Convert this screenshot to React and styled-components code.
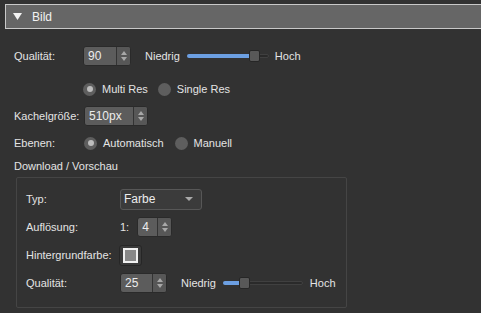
import React from "react";
import styled, { createGlobalStyle } from "styled-components";

const Global = createGlobalStyle`
  html, body { margin: 0; padding: 0; background: #323232; overflow: hidden; }
  body { font-family: "Liberation Sans", Arial, sans-serif; font-size: 11px; color: #e4e4e4; }
`;

const Page = styled.div`
  width: 481px;
  height: 313px;
  padding-top: 4px;
  box-sizing: border-box;
`;

const Header = styled.div`
  margin-left: 5px;
  margin-right: -4px;
  height: 23px;
  background: #666666;
  border: 1px solid #c9c9c9;
  display: flex;
  align-items: center;
  padding-left: 7px;
  gap: 10px;
  font-size: 12px;
  color: #f2f2f2;
`;

const Content = styled.div`
  padding: 16px 0 0 14px;
  display: flex;
  flex-direction: column;
`;

const Row = styled.div`
  display: flex;
  align-items: center;
  height: 22px;
  margin-top: ${(p) => p.$mt || 0}px;
`;

const Label = styled.div`
  width: ${(p) => p.$w}px;
  flex: none;
  white-space: nowrap;
`;

const Spin = styled.div`
  width: ${(p) => p.$w}px;
  height: 20px;
  box-sizing: border-box;
  display: flex;
  background: #5c5c5c;
  border: 1px solid #2a2a2a;
  border-radius: 3px;
  overflow: hidden;
  flex: none;
  margin-left: ${(p) => p.$ml || 0}px;
`;

const SpinValue = styled.div`
  flex: 1;
  display: flex;
  align-items: center;
  padding-left: 4px;
  font-size: 12px;
  color: #ececec;
`;

const SpinButtons = styled.div`
  width: 13px;
  border-left: 1px solid #333;
  background: #575757;
  display: flex;
  flex-direction: column;
  align-items: center;
  justify-content: center;
  gap: 2px;
`;

const Arrow = styled.div`
  width: 0;
  height: 0;
  border-left: 3.5px solid transparent;
  border-right: 3.5px solid transparent;
  ${(p) => (p.$up ? "border-bottom: 4px solid #a8a8a8;" : "border-top: 4px solid #a8a8a8;")}
`;

const Text = styled.span`
  margin-left: ${(p) => p.$ml || 0}px;
  white-space: nowrap;
`;

const Track = styled.div`
  position: relative;
  width: ${(p) => p.$w}px;
  height: 4px;
  background: #2a2a2a;
  border: 1px solid #404040;
  border-radius: 2px;
  margin-left: ${(p) => p.$ml}px;
  margin-right: ${(p) => p.$mr}px;
  box-sizing: border-box;
  flex: none;
`;

const Fill = styled.div`
  position: absolute;
  left: -1px;
  top: -1px;
  height: 4px;
  background: #6c9fe2;
  border-radius: 2px;
`;

const Handle = styled.div`
  position: absolute;
  top: -5px;
  width: 11px;
  height: 12px;
  box-sizing: border-box;
  background: #585858;
  border: 1px solid #262626;
  border-radius: 2px;
`;

const RadioWrap = styled.div`
  display: flex;
  align-items: center;
  margin-right: ${(p) => p.$mr || 0}px;
`;

const RadioCircle = styled.div`
  width: 13px;
  height: 13px;
  border-radius: 50%;
  background: #5e5e5e;
  display: flex;
  align-items: center;
  justify-content: center;
  margin-right: 6px;
  &::after {
    content: "";
    display: ${(p) => (p.$on ? "block" : "none")};
    width: 6px;
    height: 6px;
    border-radius: 50%;
    background: #bdbdbd;
  }
`;

const SectionTitle = styled.div`
  height: 16px;
  display: flex;
  align-items: center;
  margin-top: 4px;
`;

const Group = styled.div`
  margin-top: 3px;
  margin-left: 2px;
  width: 331px;
  height: 131px;
  box-sizing: border-box;
  border: 1px solid #454545;
  border-radius: 2px;
  padding: 10px 0 0 9px;
  display: flex;
  flex-direction: column;
  gap: 6px;
`;

const Dropdown = styled.div`
  width: 82px;
  height: 21px;
  box-sizing: border-box;
  background: #3b3b3b;
  border: 1px solid #575757;
  border-radius: 3px;
  display: flex;
  align-items: center;
  justify-content: space-between;
  padding: 0 8px 0 3px;
  font-size: 12px;
  color: #ececec;
  &::after {
    content: "";
    border-left: 4px solid transparent;
    border-right: 4px solid transparent;
    border-top: 4px solid #a9a9a9;
  }
`;

const ColorButton = styled.div`
  width: 23px;
  height: 21px;
  box-sizing: border-box;
  margin-left: -1px;
  background: #3a3a3a;
  border: 1px solid #262626;
  border-radius: 3px;
  display: flex;
  align-items: center;
  justify-content: center;
`;

const Swatch = styled.div`
  width: 15px;
  height: 15px;
  box-sizing: border-box;
  border: 2px solid #f0f0f0;
  background: #888888;
`;

function SpinBox({ w, value, ml }) {
  return (
    <Spin $w={w} $ml={ml}>
      <SpinValue>{value}</SpinValue>
      <SpinButtons>
        <Arrow $up />
        <Arrow />
      </SpinButtons>
    </Spin>
  );
}

function Slider({ w, pos, ml, mr }) {
  return (
    <Track $w={w} $ml={ml} $mr={mr}>
      <Fill style={{ width: pos + 2 }} />
      <Handle style={{ left: pos - 1 }} />
    </Track>
  );
}

function Radio({ on, label, mr }) {
  return (
    <RadioWrap $mr={mr}>
      <RadioCircle $on={on} />
      <span>{label}</span>
    </RadioWrap>
  );
}

export default function App() {
  return (
    <Page>
      <Global />
      <Header>
        <svg width="9" height="7" viewBox="0 0 9 7">
          <polygon points="0,0 9,0 4.5,7" fill="#f4f4f4" />
        </svg>
        <span>Bild</span>
      </Header>
      <Content>
        <Row>
          <Label $w={69}>Qualität:</Label>
          <SpinBox w={48} value="90" />
          <Text $ml={14}>Niedrig</Text>
          <Slider w={82} pos={62} ml={7} mr={6} />
          <Text>Hoch</Text>
        </Row>
        <Row $mt={11}>
          <Label $w={69} />
          <Radio on label="Multi Res" mr={10} />
          <Radio label="Single Res" />
        </Row>
        <Row $mt={5}>
          <Label $w={70}>Kachelgröße:</Label>
          <SpinBox w={64} value="510px" />
        </Row>
        <Row $mt={5}>
          <Label $w={70}>Ebenen:</Label>
          <Radio on label="Automatisch" mr={11} />
          <Radio label="Manuell" />
        </Row>
        <SectionTitle>Download / Vorschau</SectionTitle>
        <Group>
          <Row>
            <Label $w={94}>Typ:</Label>
            <Dropdown>Farbe</Dropdown>
          </Row>
          <Row>
            <Label $w={94}>Auflösung:</Label>
            <Text>1:</Text>
            <SpinBox w={35} value="4" ml={8} />
          </Row>
          <Row>
            <Label $w={94}>Hintergrundfarbe:</Label>
            <ColorButton>
              <Swatch />
            </ColorButton>
          </Row>
          <Row>
            <Label $w={94}>Qualität:</Label>
            <SpinBox w={47} value="25" />
            <Text $ml={14}>Niedrig</Text>
            <Slider w={80} pos={16} ml={7} mr={7} />
            <Text>Hoch</Text>
          </Row>
        </Group>
      </Content>
    </Page>
  );
}
